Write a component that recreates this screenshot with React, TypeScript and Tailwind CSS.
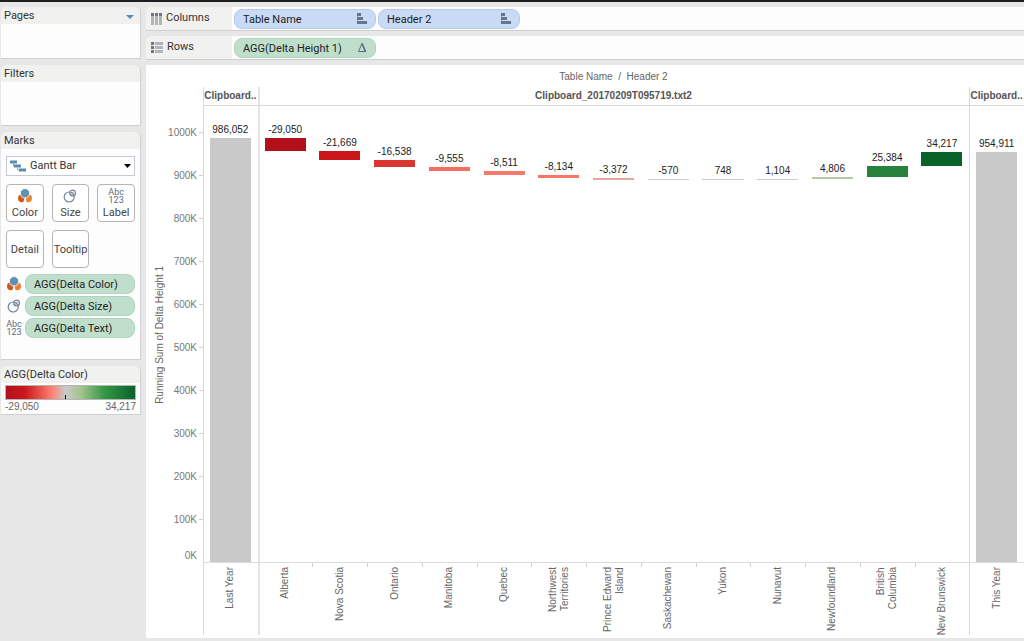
import type { ReactNode } from 'react'
import clsx from 'clsx'

const AXIS_MAX = 1061

type Mark = {
  name: string
  label: string
  top: number
  size: number
  color: string
}

const lastYear: Mark[] = [{ name: 'Last Year', label: '986,052', top: 986.052, size: 986.052, color: '#c9c9c9' }]
const thisYear: Mark[] = [{ name: 'This Year', label: '954,911', top: 954.911, size: 954.911, color: '#c9c9c9' }]

const provinces: Mark[] = [
  { name: 'Alberta', label: '-29,050', top: 986.052, size: 29.05, color: '#b3101b' },
  { name: 'Nova Scotia', label: '-21,669', top: 957.002, size: 21.669, color: '#cb161c' },
  { name: 'Ontario', label: '-16,538', top: 935.333, size: 16.538, color: '#da362f' },
  { name: 'Manitoba', label: '-9,555', top: 918.795, size: 9.555, color: '#f46f62' },
  { name: 'Quebec', label: '-8,511', top: 909.24, size: 8.511, color: '#f6786b' },
  { name: 'Northwest\nTerritories', label: '-8,134', top: 900.729, size: 8.134, color: '#f6776a' },
  { name: 'Prince Edward\nIsland', label: '-3,372', top: 892.595, size: 3.372, color: '#e9a49d' },
  { name: 'Saskachewan', label: '-570', top: 889.223, size: 0.57, color: '#cfc9c8' },
  { name: 'Yukon', label: '748', top: 889.401, size: 0.748, color: '#c8cac7' },
  { name: 'Nunavut', label: '1,104', top: 890.505, size: 1.104, color: '#c6cbc3' },
  { name: 'Newfoundland', label: '4,806', top: 895.311, size: 4.806, color: '#b2cba3' },
  { name: 'British\nColumbia', label: '25,384', top: 920.695, size: 25.384, color: '#27823c' },
  { name: 'New Brunswick', label: '34,217', top: 954.912, size: 34.217, color: '#09622a' },
]

const ticks = [1000, 900, 800, 700, 600, 500, 400, 300, 200, 100]

const percent = (value: number) => `${(value / AXIS_MAX) * 100}%`

const ColorIcon = () => (
  <svg className="size-4" viewBox="0 0 16 16">
    <circle cx="5" cy="10.2" r="4" fill="#cf5a1b" />
    <circle cx="11" cy="10.2" r="4" fill="#f07f2e" />
    <path d="M8 8.5l-1.6 5.5h3.2z" fill="#fff" />
    <circle cx="8" cy="5.3" r="4.7" fill="#5f90b4" stroke="#fff" strokeWidth="0.9" />
  </svg>
)

const SizeIcon = () => (
  <svg className="size-4" viewBox="0 0 16 16" fill="none" stroke="#76859a" strokeWidth="1.2">
    <circle cx="7.2" cy="9" r="5" />
    <circle cx="10.6" cy="5" r="2.9" />
    <path d="M8.6 7l3-3.2" strokeWidth="0.9" />
  </svg>
)

const AbcIcon = () => (
  <span className="flex w-4 flex-col items-center text-[9px] leading-[8px] text-[#5a6b82]">
    <span className="h-2">Abc</span>
    <span className="h-2">123</span>
  </span>
)

const GanttIcon = () => (
  <svg className="h-3 w-4 shrink-0" viewBox="0 0 16 12" fill="#5b8db0">
    <rect x="0" y="0.5" width="7" height="3" />
    <rect x="4" y="4.5" width="7" height="3" />
    <rect x="9" y="8.5" width="7" height="3" />
    <path d="M3.5 3.5v2.5H4M7.5 7.5v2.5H9" fill="none" stroke="#8fb0c8" />
  </svg>
)

const ColumnsIcon = () => (
  <svg className="h-3 w-[11px]" viewBox="0 0 11 12">
    {[0, 4, 8].map((x) => (
      <g key={x}>
        <rect x={x} y="0" width="3" height="3" fill="#6d7784" />
        <rect x={x} y="3" width="3" height="9" fill="#b1b5ba" />
      </g>
    ))}
  </svg>
)

const RowsIcon = () => (
  <svg className="h-[11px] w-3" viewBox="0 0 12 11">
    {[0, 4, 8].map((y) => (
      <g key={y}>
        <rect x="0" y={y} width="3" height="3" fill="#6d7784" />
        <rect x="4" y={y} width="8" height="3" fill="#b1b5ba" />
      </g>
    ))}
  </svg>
)

const SortIcon = () => (
  <svg className="h-[11px] w-[10px]" viewBox="0 0 10 11" fill="#66758a">
    <rect x="0" y="0" width="4" height="3" />
    <rect x="0" y="4" width="6" height="3" />
    <rect x="0" y="8" width="10" height="3" />
    <rect x="0" y="0" width="1" height="11" opacity="0.5" />
  </svg>
)

const DeltaIcon = () => (
  <svg className="h-[11px] w-[10px]" viewBox="0 0 10 11" fill="none" stroke="#5d6d80">
    <path d="M5 1.5L1.5 9.5H8.5Z" />
    <path d="M5 1.5L8.5 9.5" strokeWidth="1.6" />
  </svg>
)

const Card = ({ title, action, className, children }: { title: string; action?: ReactNode; className?: string; children?: ReactNode }) => (
  <section className={clsx('rounded-t-md border-r border-b border-[#cfcfcf] bg-[#fdfdfd]', className)}>
    <header className="flex h-[17px] items-center justify-between rounded-t-md bg-[#f1f1ef] pt-0.5 pr-1.5 pl-[3px]">
      <h2>{title}</h2>
      {action}
    </header>
    {children}
  </section>
)

const MarkButton = ({ label, icon }: { label: string; icon?: ReactNode }) => (
  <button type="button" className="flex h-[38px] flex-col items-center justify-center gap-px rounded border border-[#b5b5b5] bg-white pt-0.5 text-[#444]">
    {icon}
    <span className="leading-4">{label}</span>
  </button>
)

const Pill = ({ label, icon, className }: { label: string; icon?: ReactNode; className: string }) => (
  <button type="button" className={clsx('flex h-5 items-center justify-between rounded-lg border px-2 whitespace-nowrap text-[#222]', className)}>
    <span className="pt-0.5 leading-4">{label}</span>
    {icon}
  </button>
)

const Shelf = ({ title, icon, children }: { title: string; icon: ReactNode; children: ReactNode }) => (
  <section className="flex h-6 items-center rounded-tl-md border-b border-[#cfcfcf] bg-[#fdfdfd]">
    <h2 className="flex h-full w-[86px] items-center gap-1 rounded-tl-md bg-[#f1f1ef] pl-[5px] text-[11px]">
      {icon}
      {title}
    </h2>
    <div className="flex gap-0.5 pl-0.5">{children}</div>
  </section>
)

const Pane = ({ title, marks, className }: { title: string; marks: Mark[]; className: string }) => (
  <div className={clsx('flex min-w-0 basis-0 flex-col', className)}>
    <h3 className="h-[19px] overflow-hidden border-b border-[#d9d9d9] text-center leading-[18px] font-bold whitespace-nowrap text-[#555]">{title}</h3>
    <div className="flex min-h-0 flex-1 border-b border-[#dcdcdc]">
      {marks.map(({ name, label, top, size, color }) => (
        <div key={name} className="flex flex-1 basis-0 flex-col items-center justify-end">
          <span className="leading-4 text-[#222]">{label}</span>
          <div className={clsx('w-3/4 shrink-0', size > 3 ? 'min-h-0.5' : 'min-h-px')} style={{ height: percent(size), backgroundColor: color }} />
          <div className="shrink-0" style={{ height: percent(top - size) }} />
        </div>
      ))}
    </div>
    <div className="flex h-[72px]">
      {marks.map(({ name }, i) => (
        <div key={name} className="flex flex-1 basis-0 flex-col">
          <div className={clsx('h-1', i > 0 && 'border-l border-[#cfcfcf]')} />
          <div className="flex justify-center">
            <span className="rotate-180 text-right leading-3 whitespace-pre text-[#666] [writing-mode:vertical-rl]">{name}</span>
          </div>
        </div>
      ))}
    </div>
  </div>
)

const Axis = () => (
  <div className="flex w-[57px] shrink-0 pt-[19px] pb-[72px] text-[#777]">
    <div className="flex w-7 shrink-0 items-center justify-center">
      <span className="rotate-180 leading-3 whitespace-nowrap text-[#666] [writing-mode:vertical-rl]">Running Sum of Delta Height 1</span>
    </div>
    <div className="flex min-w-0 flex-1 flex-col justify-end border-b border-transparent">
      {ticks.map((tick) => (
        <div key={tick} className="flex flex-col justify-between" style={{ height: percent(100) }}>
          <div className="flex h-0 items-center justify-end gap-0.5">
            {tick}K
            <div className="h-px w-1 shrink-0 bg-[#d4d4d4]" />
          </div>
          {tick === 100 && <span className="pr-1.5 text-right leading-3">0K</span>}
        </div>
      ))}
    </div>
  </div>
)

const App = () => (
  <div className="flex h-screen min-h-[480px] gap-[5px] overflow-hidden border-t-2 border-[#1e1e1e] bg-[#e7e7e7] pb-[3px] font-['Roboto',sans-serif] text-[11px] text-[#333]">
    <aside className="flex w-[141px] shrink-0 flex-col gap-1.5 pt-[5px] pl-px">
      <Card
        title="Pages"
        className="h-[52px]"
        action={
          <button type="button" aria-label="Pages menu">
            <svg className="h-1 w-2" viewBox="0 0 8 4" fill="#5a8ab8"><path d="M0 0h8L4 4z" /></svg>
          </button>
        }
      />
      <Card title="Filters" className="h-[61px]" />
      <Card title="Marks" className="h-[228px]">
        <div className="flex flex-col gap-2 px-[5px] pt-[7px]">
          <label className="flex h-5 items-center gap-1 border border-[#c5cad6] bg-white px-[3px]">
            <GanttIcon />
            <select aria-label="Mark type" className="min-w-0 flex-1 appearance-none bg-transparent">
              <option>Gantt Bar</option>
            </select>
            <svg className="h-1 w-[7px]" viewBox="0 0 7 4"><path d="M0 0h7L3.5 4z" /></svg>
          </label>
          <div className="grid grid-cols-3 gap-2">
            <MarkButton label="Color" icon={<ColorIcon />} />
            <MarkButton label="Size" icon={<SizeIcon />} />
            <MarkButton label="Label" icon={<AbcIcon />} />
            <MarkButton label="Detail" />
            <MarkButton label="Tooltip" />
          </div>
        </div>
        <ul className="flex flex-col gap-0.5 px-[5px] pt-1.5">
          {[
            { label: 'AGG(Delta Color)', icon: <ColorIcon /> },
            { label: 'AGG(Delta Size)', icon: <SizeIcon /> },
            { label: 'AGG(Delta Text)', icon: <AbcIcon /> },
          ].map(({ label, icon }) => (
            <li key={label} className="flex items-center gap-[3px]">
              {icon}
              <Pill label={label} className="flex-1 border-[#b0d4bf] bg-[#bfdfcc]" />
            </li>
          ))}
        </ul>
      </Card>
      <Card title="AGG(Delta Color)" className="h-[49px]">
        <div className="px-1 pt-0.5 font-['Liberation_Sans',sans-serif] text-[10px] text-[#666]">
          <div className="flex h-[15px] items-end border border-[#b5b5b5] bg-[linear-gradient(90deg,#b3101b,#cb181d_15%,#fc8375_36%,#c9c9c9_46%,#a3c48f_58%,#359846_76%,#09622a)]">
            <div className="ml-[46%] h-1 w-px bg-black" />
          </div>
          <div className="flex justify-between leading-[14px]">
            <span>-29,050</span>
            <span>34,217</span>
          </div>
        </div>
      </Card>
    </aside>

    <main className="flex min-w-0 flex-1 flex-col gap-[5px] pt-[5px]">
      <Shelf title="Columns" icon={<ColumnsIcon />}>
        <Pill label="Table Name" icon={<SortIcon />} className="w-[142px] border-[#b4cbee] bg-[#c9daf5]" />
        <Pill label="Header 2" icon={<SortIcon />} className="w-[142px] border-[#b4cbee] bg-[#c9daf5]" />
      </Shelf>
      <Shelf title="Rows" icon={<RowsIcon />}>
        <Pill label="AGG(Delta Height 1)" icon={<DeltaIcon />} className="w-[142px] border-[#b0d4bf] bg-[#bfdfcc]" />
      </Shelf>
      <section className="flex min-h-0 flex-1 flex-col bg-white pb-[3px] font-['Liberation_Sans',sans-serif] text-[10px]">
        <h2 className="ml-[57px] h-[22px] text-center leading-6 whitespace-pre text-[#666]">Table Name  /  Header 2</h2>
        <div className="flex min-h-0 flex-1">
          <Axis />
          <Pane title="Clipboard.." marks={lastYear} className="grow shadow-[inset_1px_0_#d9d9d9]" />
          <Pane title="Clipboard_20170209T095719.txt2" marks={provinces} className="grow-[13] shadow-[inset_2px_0_#e4e4e4]" />
          <Pane title="Clipboard.." marks={thisYear} className="grow shadow-[inset_1px_0_#d9d9d9]" />
        </div>
      </section>
    </main>
  </div>
)

export default App
